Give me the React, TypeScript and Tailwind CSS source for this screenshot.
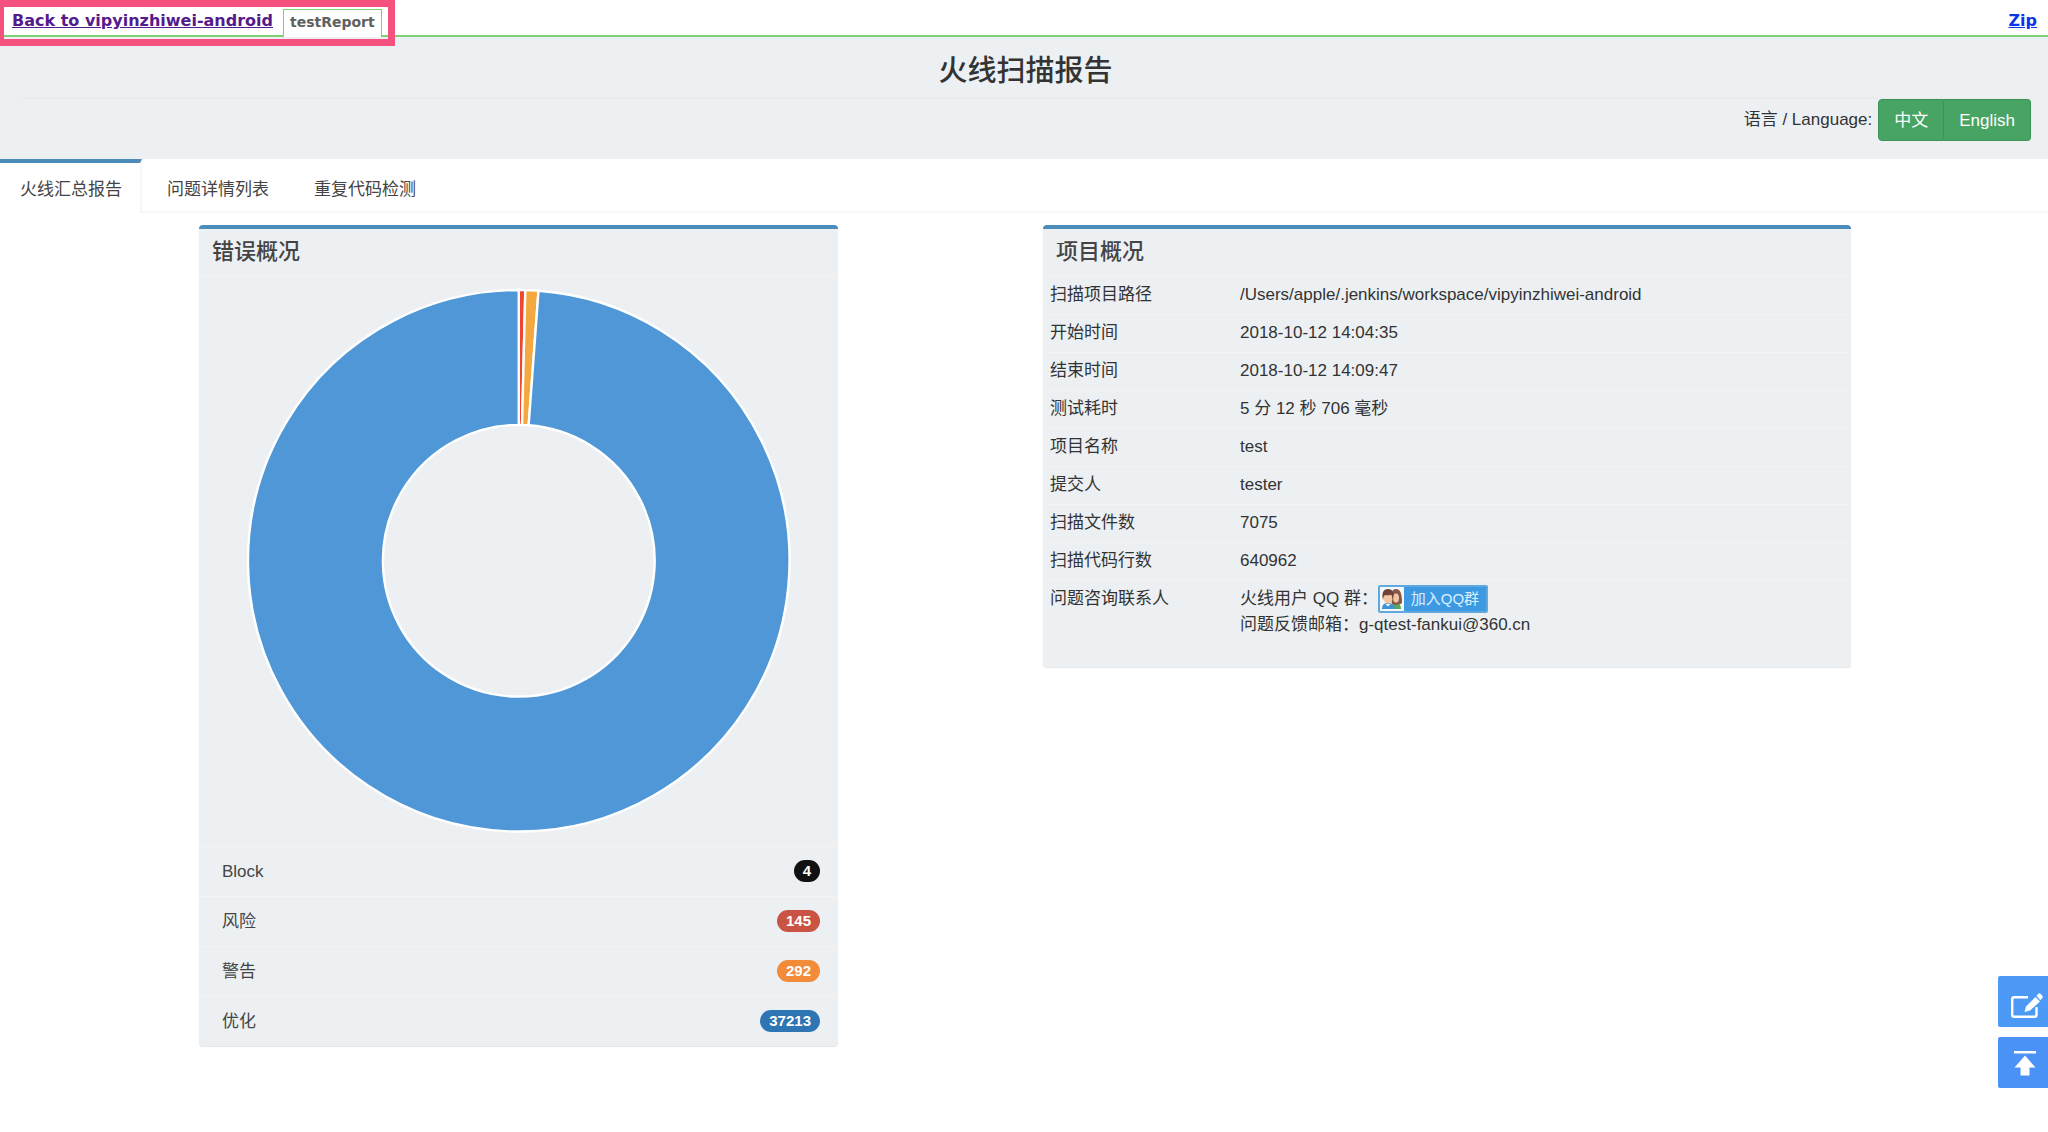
import React from "react";

const summary = [
  { label: "Block", value: 4, badge: "bg-[#111111]" },
  { label: "风险", value: 145, badge: "bg-[#ca5443]" },
  { label: "警告", value: 292, badge: "bg-[#f28c3b]" },
  { label: "优化", value: 37213, badge: "bg-[#2e75b3]" },
];

const slices = [
  { value: 145, color: "#f0462d" },
  { value: 292, color: "#f4a840" },
  { value: 37213, color: "#4f97d6" },
];

const details = [
  ["扫描项目路径", "/Users/apple/.jenkins/workspace/vipyinzhiwei-android"],
  ["开始时间", "2018-10-12 14:04:35"],
  ["结束时间", "2018-10-12 14:09:47"],
  ["测试耗时", "5 分 12 秒 706 毫秒"],
  ["项目名称", "test"],
  ["提交人", "tester"],
  ["扫描文件数", "7075"],
  ["扫描代码行数", "640962"],
];

const tabs = ["火线汇总报告", "问题详情列表", "重复代码检测"];

function Donut() {
  const c = 275;
  const outer = 271;
  const inner = 136;
  const total = slices.reduce((sum, s) => sum + s.value, 0);
  let angle = 0;
  const point = (r: number, a: number) =>
    `${(c + r * Math.sin(a)).toFixed(2)} ${(c - r * Math.cos(a)).toFixed(2)}`;
  return (
    <svg viewBox="0 0 550 550" className="w-[86%]" role="img" aria-label="错误概况">
      {slices.map((s) => {
        const start = angle;
        const end = angle + (s.value / total) * Math.PI * 2;
        angle = end;
        const large = end - start > Math.PI ? 1 : 0;
        return (
          <path
            key={s.color}
            d={`M${point(outer, start)} A${outer} ${outer} 0 ${large} 1 ${point(outer, end)} L${point(inner, end)} A${inner} ${inner} 0 ${large} 0 ${point(inner, start)} Z`}
            fill={s.color}
            stroke="#ffffff"
            strokeWidth="2.4"
          />
        );
      })}
    </svg>
  );
}

function Panel({ title, className, children }: { title: string; className: string; children: React.ReactNode }) {
  return (
    <section className={`rounded border-t-4 border-[#4c8cba] bg-[#ecf0f3] shadow-[0_1px_1px_rgba(0,0,0,0.1)] ${className}`}>
      <h2 className="border-b border-[#f3f3f4] px-[13px] pt-2.5 pb-2.5 text-[22px] leading-[26px] font-medium text-[#444]">{title}</h2>
      {children}
    </section>
  );
}

function PeopleIcon() {
  return (
    <svg viewBox="0 0 24 24" className="h-6 w-6 bg-[#f4f8fb]" aria-hidden="true">
      <path d="M11 22c0-4 2-6 5-6s5 2 5 6z" fill="#58a957" />
      <path d="M11 12c0-6 1-10 5-10s6 4 6 14c-2 2-8 2-10 1z" fill="#8a5544" />
      <ellipse cx="16" cy="11" rx="3" ry="4.5" fill="#f2c6a5" />
      <path d="M2 22c0-4 2-6 6-6s7 2 7 6z" fill="#3f93cf" />
      <path d="M5.500 17l2.500 2.500 2.500-2.500z" fill="#fff" />
      <ellipse cx="8" cy="11" rx="4.500" ry="5.500" fill="#f2c6a5" />
      <path d="M3 13C1.500 6 3 2 8 2s6.500 4 5 11c-.5-3-1-4-2-5.500-2 1-4 1-6 .5-1 1-1.500 2-2 5z" fill="#704238" />
    </svg>
  );
}

export default function App() {
  return (
    <div className="min-h-screen bg-white font-['Liberation_Sans','Noto_Sans_CJK_SC',sans-serif] text-[17px] leading-6 text-[#333]">
      <div className="relative">
        <nav className="flex h-[37px] items-end justify-between border-b-2 border-[#7fd075] font-['DejaVu_Sans',sans-serif] text-[16px] font-bold">
          <div className="flex items-end">
            <a href="#back" className="mr-2.5 ml-3 pb-0.5 text-[#551a8b] underline">Back to vipyinzhiwei-android</a>
            <span className="-mb-0.5 border border-b-0 border-[#7fd075] bg-white px-1.5 pb-0.5 text-[14px] leading-[25px] text-[#606060]">testReport</span>
          </div>
          <a href="#zip" className="mr-[11px] pb-0.5 text-[#0a35e8] underline">Zip</a>
        </nav>
        <div className="pointer-events-none absolute top-0 left-0 h-[46px] w-[395px] border-[7px] border-l-4 border-[#f4517f]" />
      </div>

      <header className="bg-[#ecf0f3] pr-[17px] pb-[18px] pl-5">
        <h1 className="border-b border-[#e9e9eb] pt-[18px] pb-[11px] text-center text-[29px] leading-8 font-medium">火线扫描报告</h1>
        <div className="flex items-center justify-end gap-1.5">
          <span>语言 / Language:</span>
          <div className="flex h-[42px] text-white">
            <button className="rounded-l border border-[#3f9257] bg-[#48a462] px-[15px] pt-0.5">中文</button>
            <button className="rounded-r border border-l-0 border-[#3f9257] bg-[#48a462] px-[15px] pt-0.5">English</button>
          </div>
        </div>
      </header>

      <div role="tablist" className="flex border-b-2 border-[#f7f7f7] text-[#444]">
        {tabs.map((tab, i) => (
          <button
            key={tab}
            role="tab"
            aria-selected={i === 0}
            className={
              i === 0
                ? "-mb-0.5 mr-[5px] h-[54px] border-t-4 border-r-2 border-t-[#4c8cba] border-r-[#f7f7f7] bg-white pt-1 pr-[18px] pl-5"
                : "mr-[5px] h-[54px] -mb-0.5 border-t-4 border-transparent px-5 pt-1"
            }
          >
            {tab}
          </button>
        ))}
      </div>

      <main className="grid grid-cols-[199fr_639fr_205fr_808fr_197fr] items-start pt-3">
        <Panel title="错误概况" className="col-start-2">
          <div className="flex justify-center py-2.5">
            <Donut />
          </div>
          <ul className="text-[#444]">
            {summary.map((item) => (
              <li key={item.label} className="flex h-[50px] items-center justify-between border-t border-[#f3f3f4] pr-[18px] pl-[23px]">
                <span className="pt-0.5">{item.label}</span>
                <span className={`rounded-full px-[9px] text-[15px] leading-[22px] font-bold text-white ${item.badge}`}>{item.value}</span>
              </li>
            ))}
          </ul>
        </Panel>

        <Panel title="项目概况" className="col-start-4 pb-[30px]">
          <table className="w-full table-fixed">
            <tbody>
              {details.map(([label, value]) => (
                <tr key={label} className="h-[38px] border-b border-[#f3f3f4]">
                  <th scope="row" className="w-[190px] px-[7px] text-left font-normal">{label}</th>
                  <td className="px-[7px]">{value}</td>
                </tr>
              ))}
              <tr className="align-top">
                <th scope="row" className="px-[7px] pt-1 text-left leading-7 font-normal">问题咨询联系人</th>
                <td className="px-[7px] pt-1">
                  <div className="flex h-7 items-center">
                    <span>火线用户 QQ 群：</span>
                    <a href="#qq" className="flex h-7 w-[110px] items-center rounded-xs border-2 border-[#5fa9df] bg-[#3d9ae2] text-[15px] text-[#d9efff]">
                      <PeopleIcon />
                      <span className="flex-1 text-center">加入QQ群</span>
                    </a>
                  </div>
                  <div>问题反馈邮箱：g-qtest-fankui@360.cn</div>
                </td>
              </tr>
            </tbody>
          </table>
        </Panel>
      </main>

      <aside className="fixed right-0 bottom-11 flex flex-col gap-2.5">
        <button aria-label="反馈" className="flex h-[51px] w-[50px] items-center justify-center rounded-l-xs bg-[#4c9af6] pt-1.5 pl-1.5">
          <svg viewBox="0 0 33 30" className="h-[30px] w-[33px]" fill="none" stroke="#fff" strokeWidth="2.400" aria-hidden="true">
            <path d="M18 7.200H4.200Q2.200 7.200 2.200 9.200V24.800Q2.200 26.800 4.200 26.800H24.500Q26.500 26.800 26.500 24.800V17" />
            <path d="M14.500 22l1.500-5.500L25.500 7l4.500 4.500L20 20.500z" fill="#fff" stroke="none" />
            <path d="M26.500 6l2-2.500q1-.8 2 .2l2 2.300q.8 1-.2 2l-2 2.200z" fill="#fff" stroke="none" />
          </svg>
        </button>
        <button aria-label="返回顶部" className="flex h-[51px] w-[50px] items-center justify-center rounded-l-xs bg-[#4a92f6] pl-1">
          <svg viewBox="0 0 24 26" className="h-[26px] w-6" fill="#fff" aria-hidden="true">
            <path d="M1 1h22v2.500H1zM12 5.500l10.500 12H16.500v8h-9v-8H1.500z" />
          </svg>
        </button>
      </aside>
    </div>
  );
}
